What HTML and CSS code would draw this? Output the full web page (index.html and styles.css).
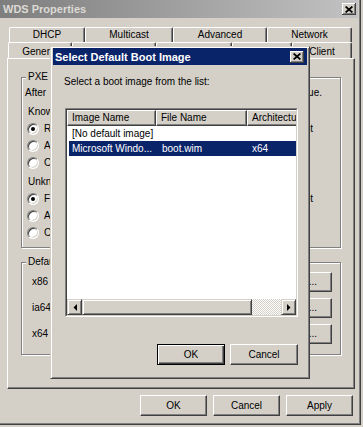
FILE: index.html
```html
<!DOCTYPE html>
<html>
<head>
<meta charset="utf-8">
<title>WDS Properties</title>
<link rel="stylesheet" href="styles.css">
</head>
<body>
<div class="win">
  <div class="caption">
    <span class="cap-text">WDS Properties</span>
    <span class="cap-btn"><svg width="8" height="7" viewBox="0 0 8 7"><path d="M0.6 0.5 L7.4 6.5 M7.4 0.5 L0.6 6.5" stroke="#000" stroke-width="1.7" fill="none"/></svg></span>
  </div>
  <div class="client">
    <div class="tabs">
      <div class="tab-row back">
        <div class="tab w-dhcp">DHCP</div>
        <div class="tab w-multi">Multicast</div>
        <div class="tab w-adv">Advanced</div>
        <div class="tab w-net">Network</div>
      </div>
      <div class="tab-row front">
        <div class="tab w-gen">General</div>
        <div class="tab w-pxe">PXE Response</div>
        <div class="tab w-ad">AD DS</div>
        <div class="tab w-boot">Boot</div>
        <div class="tab w-client">Client</div>
      </div>
    </div>
    <div class="panel">
      <div class="group g-pxe">
        <span class="legend">PXE Boot Policy</span>
        <div class="desc">After a PXE boot request, the server will continue.</div>
        <div class="sub">Known clients:</div>
        <div class="radio-row"><span class="radio on"></span><span class="lbl first">Require the user to press F12 to start the boot</span></div>
        <div class="radio-row"><span class="radio"></span><span class="lbl">Always continue the PXE boot</span></div>
        <div class="radio-row"><span class="radio"></span><span class="lbl">Continue the PXE boot unless the user presses ESC</span></div>
        <div class="sub u">Unknown clients:</div>
        <div class="radio-row"><span class="radio on"></span><span class="lbl first">F12 key press required to start the boot</span></div>
        <div class="radio-row"><span class="radio"></span><span class="lbl">Always continue the PXE boot</span></div>
        <div class="radio-row"><span class="radio"></span><span class="lbl">Continue the PXE boot unless the user presses ESC</span></div>
      </div>
      <div class="group g-def">
        <span class="legend">Default boot image (optional)</span>
        <div class="arch-row"><span class="arch">x86</span><span class="btn sel-btn">Select...</span></div>
        <div class="arch-row"><span class="arch">ia64</span><span class="btn sel-btn">Select...</span></div>
        <div class="arch-row"><span class="arch">x64</span><span class="btn sel-btn">Select...</span></div>
      </div>
    </div>
    <div class="actions">
      <span class="btn act">OK</span>
      <span class="btn act">Cancel</span>
      <span class="btn act">Apply</span>
    </div>
  </div>
</div>

<div class="dlg">
  <div class="dlg-cap">
    <span class="dlg-title">Select Default Boot Image</span>
    <span class="cap-btn"><svg width="8" height="7" viewBox="0 0 8 7"><path d="M0.6 0.5 L7.4 6.5 M7.4 0.5 L0.6 6.5" stroke="#000" stroke-width="1.7" fill="none"/></svg></span>
  </div>
  <div class="dlg-body">
    <div class="prompt">Select a boot image from the list:</div>
    <div class="list">
      <div class="list-in">
        <div class="lv-head">
          <div class="hd c1">Image Name</div>
          <div class="hd c2">File Name</div>
          <div class="hd c3">Architecture</div>
        </div>
        <div class="lv-body">
          <div class="lv-row"><span class="c1">[No default image]</span><span class="c2"></span><span class="c3"></span></div>
          <div class="lv-row sel"><span class="c1">Microsoft Windo...</span><span class="c2">boot.wim</span><span class="c3">x64</span></div>
        </div>
        <div class="hscroll">
          <span class="sb-btn"><svg width="4" height="7" viewBox="0 0 4 7"><polygon points="4,0 4,7 0.5,3.5" fill="#000"/></svg></span>
          <span class="sb-thumb"></span>
          <span class="sb-track"></span>
          <span class="sb-btn"><svg width="4" height="7" viewBox="0 0 4 7"><polygon points="0,0 0,7 3.5,3.5" fill="#000"/></svg></span>
        </div>
      </div>
    </div>
    <div class="dlg-actions">
      <span class="btn dbtn def">OK</span>
      <span class="btn dbtn">Cancel</span>
    </div>
  </div>
</div>
</body>
</html>
```

FILE: styles.css
```css
* { box-sizing: border-box; }
html, body { margin: 0; padding: 0; }
body {
  width: 363px;
  height: 427px;
  overflow: hidden;
  position: relative;
  background: #d4d0c8;
  font-family: "Liberation Sans", Arial, sans-serif;
  font-size: 10px;
  line-height: 12px;
  color: #000;
}

.win {
  width: 361px;
  height: 425px;
  border-right: 1px solid #404040;
  border-bottom: 1px solid #404040;
  box-shadow: inset -1px -1px 0 #808080;
  display: flex;
  flex-direction: column;
}

.caption {
  height: 18px;
  margin-right: 2px;
  background: linear-gradient(90deg, #7e7e7e, #c2c2c2);
  display: flex;
  align-items: center;
  justify-content: space-between;
  padding: 0 2px 0 3px;
  flex: none;
}
.cap-text {
  font-weight: bold;
  font-size: 11px;
  color: #dcdad4;
}
.cap-btn {
  width: 14px;
  height: 12px;
  background: #d4d0c8;
  box-shadow: inset -1px -1px 0 #404040, inset 1px 1px 0 #fff, inset -2px -2px 0 #808080;
  display: flex;
  align-items: center;
  justify-content: center;
  flex: none;
}

.client {
  flex: 1;
  padding: 9px 0 0 7px;
  display: flex;
  flex-direction: column;
}

.tabs {
  height: 31px;
  display: flex;
  flex-direction: column;
  flex: none;
}
.tab-row { display: flex; }
.tab-row.back { height: 15px; margin-left: 2px; }
.tab-row.front { height: 16px; margin-left: 1px; }
.tab {
  height: 100%;
  background: #d4d0c8;
  border-top: 1px solid #fff;
  border-left: 1px solid #fff;
  border-right: 1px solid #404040;
  box-shadow: inset -1px 0 0 #808080;
  border-radius: 2px 2px 0 0;
  text-align: center;
  line-height: 13px;
  white-space: nowrap;
  overflow: hidden;
}
.tab-row.front .tab { padding-top: 2px; }
.w-dhcp { width: 76px; }
.w-multi { width: 88px; }
.w-adv { width: 94px; }
.w-net { width: 85px; }
.w-gen { width: 64px; }
.w-pxe { width: 84px; }
.w-ad { width: 76px; }
.w-boot { width: 60px; }
.w-client { width: 60px; }

.panel {
  width: 348px;
  height: 331px;
  flex: none;
  border: 1px solid;
  border-color: #fff #404040 #404040 #fff;
  box-shadow: inset -1px -1px 0 #808080;
  padding: 18px 0 0 13px;
}

.group {
  position: relative;
  width: 320px;
  border: 1px solid #808080;
  box-shadow: inset 1px 1px 0 #fff, 1px 1px 0 #fff;
}
.legend {
  position: absolute;
  left: 4px;
  top: -7px;
  padding: 0 2px;
  background: #d4d0c8;
  white-space: nowrap;
}
.g-pxe {
  height: 171px;
  padding: 9px 0 0 3px;
}
.desc {
  width: 297px;
  text-align: justify;
  text-align-last: justify;
}
.sub {
  margin-top: 7px;
  margin-bottom: 2px;
  padding-left: 3px;
}
.sub.u { margin-top: 5px; }
.radio-row {
  height: 17px;
  display: flex;
  align-items: center;
  padding-left: 2px;
}
.radio {
  width: 12px;
  height: 12px;
  flex: none;
  border-radius: 50%;
  background: #fff;
  border: 1px solid;
  border-color: #808080 #fff #fff #808080;
  box-shadow: inset 1px 1px 0 #404040, inset -1px -1px 0 #d4d0c8;
  display: flex;
  align-items: center;
  justify-content: center;
  margin-right: 5px;
}
.radio.on::after {
  content: "";
  width: 4px;
  height: 4px;
  border-radius: 50%;
  background: #000;
}
.lbl { white-space: nowrap; }
.lbl.first {
  width: 269px;
  white-space: normal;
  text-align: justify;
  text-align-last: justify;
}

.g-def {
  margin-top: 14px;
  height: 93px;
  padding: 9px 8px 0 10px;
  display: flex;
  flex-direction: column;
  gap: 6px;
}
.arch-row {
  height: 20px;
  display: flex;
  align-items: center;
  justify-content: space-between;
}

.btn {
  display: flex;
  align-items: center;
  justify-content: center;
  background: #d4d0c8;
  border: 1px solid;
  border-color: #fff #404040 #404040 #fff;
  box-shadow: inset -1px -1px 0 #808080;
  white-space: nowrap;
}
.sel-btn { width: 66px; height: 20px; }

.actions {
  width: 346px;
  margin-top: 6px;
  display: flex;
  justify-content: flex-end;
  gap: 6px;
}
.act { width: 67px; height: 21px; }

/* Modal dialog */
.dlg {
  position: absolute;
  left: 50px;
  top: 46px;
  width: 260px;
  height: 333px;
  background: #d4d0c8;
  border: 1px solid;
  border-color: #d4d0c8 #404040 #404040 #d4d0c8;
  box-shadow: inset 1px 1px 0 #fff, inset -1px -1px 0 #808080;
  padding: 1px 2px 2px 2px;
  display: flex;
  flex-direction: column;
}
.dlg-cap {
  height: 17px;
  flex: none;
  background: #0a246a;
  display: flex;
  align-items: center;
  justify-content: space-between;
  padding: 0 3px 0 2px;
}
.dlg-title {
  color: #fff;
  font-weight: bold;
  font-size: 11px;
}
.dlg-body {
  padding: 11px 9px 0 11px;
}
.list {
  margin-top: 20px;
  margin-left: 1px;
  width: 233px;
  height: 209px;
  background: #fff;
  border: 1px solid;
  border-color: #808080 #fff #fff #808080;
}
.list-in {
  height: 100%;
  border: 1px solid;
  border-color: #404040 #d4d0c8 #d4d0c8 #404040;
  display: flex;
  flex-direction: column;
  overflow: hidden;
}
.lv-head {
  display: flex;
  height: 16px;
  flex: none;
}
.hd {
  flex: none;
  background: #d4d0c8;
  border: 1px solid;
  border-color: #fff #404040 #404040 #fff;
  box-shadow: inset -1px -1px 0 #808080;
  padding-left: 4px;
  line-height: 13px;
  white-space: nowrap;
  overflow: hidden;
}
.hd.c1 { width: 89px; }
.hd.c2 { width: 91px; }
.hd.c3 { width: 90px; }
.lv-body { flex: 1; }
.lv-row {
  display: flex;
  height: 15px;
  line-height: 15px;
  margin-left: 2px;
  width: 270px;
  white-space: nowrap;
}
.lv-row .c1 { width: 87px; padding-left: 3px; flex: none; }
.lv-row .c2 { width: 91px; padding-left: 6px; flex: none; }
.lv-row .c3 { flex: 1; padding-left: 5px; }
.lv-row.sel { background: #0a246a; color: #fff; }

.hscroll {
  height: 16px;
  flex: none;
  display: flex;
}
.sb-btn {
  width: 15px;
  flex: none;
  background: #d4d0c8;
  border: 1px solid;
  border-color: #d4d0c8 #404040 #404040 #d4d0c8;
  box-shadow: inset 1px 1px 0 #fff, inset -1px -1px 0 #808080;
  display: flex;
  align-items: center;
  justify-content: center;
}
.sb-thumb {
  width: 170px;
  flex: none;
  background: #d4d0c8;
  border: 1px solid;
  border-color: #d4d0c8 #404040 #404040 #d4d0c8;
  box-shadow: inset 1px 1px 0 #fff, inset -1px -1px 0 #808080;
}
.sb-track {
  flex: 1;
  background: repeating-conic-gradient(#d4d0c8 0 25%, #fff 0 50%) 0 0 / 2px 2px;
}

.dlg-actions {
  margin-top: 27px;
  display: flex;
  justify-content: flex-end;
  gap: 5px;
}
.dbtn { width: 68px; height: 21px; }
.dbtn.def {
  border: 1px solid #000;
  box-shadow: inset 1px 1px 0 #fff, inset -1px -1px 0 #404040, inset -2px -2px 0 #808080;
}
```
